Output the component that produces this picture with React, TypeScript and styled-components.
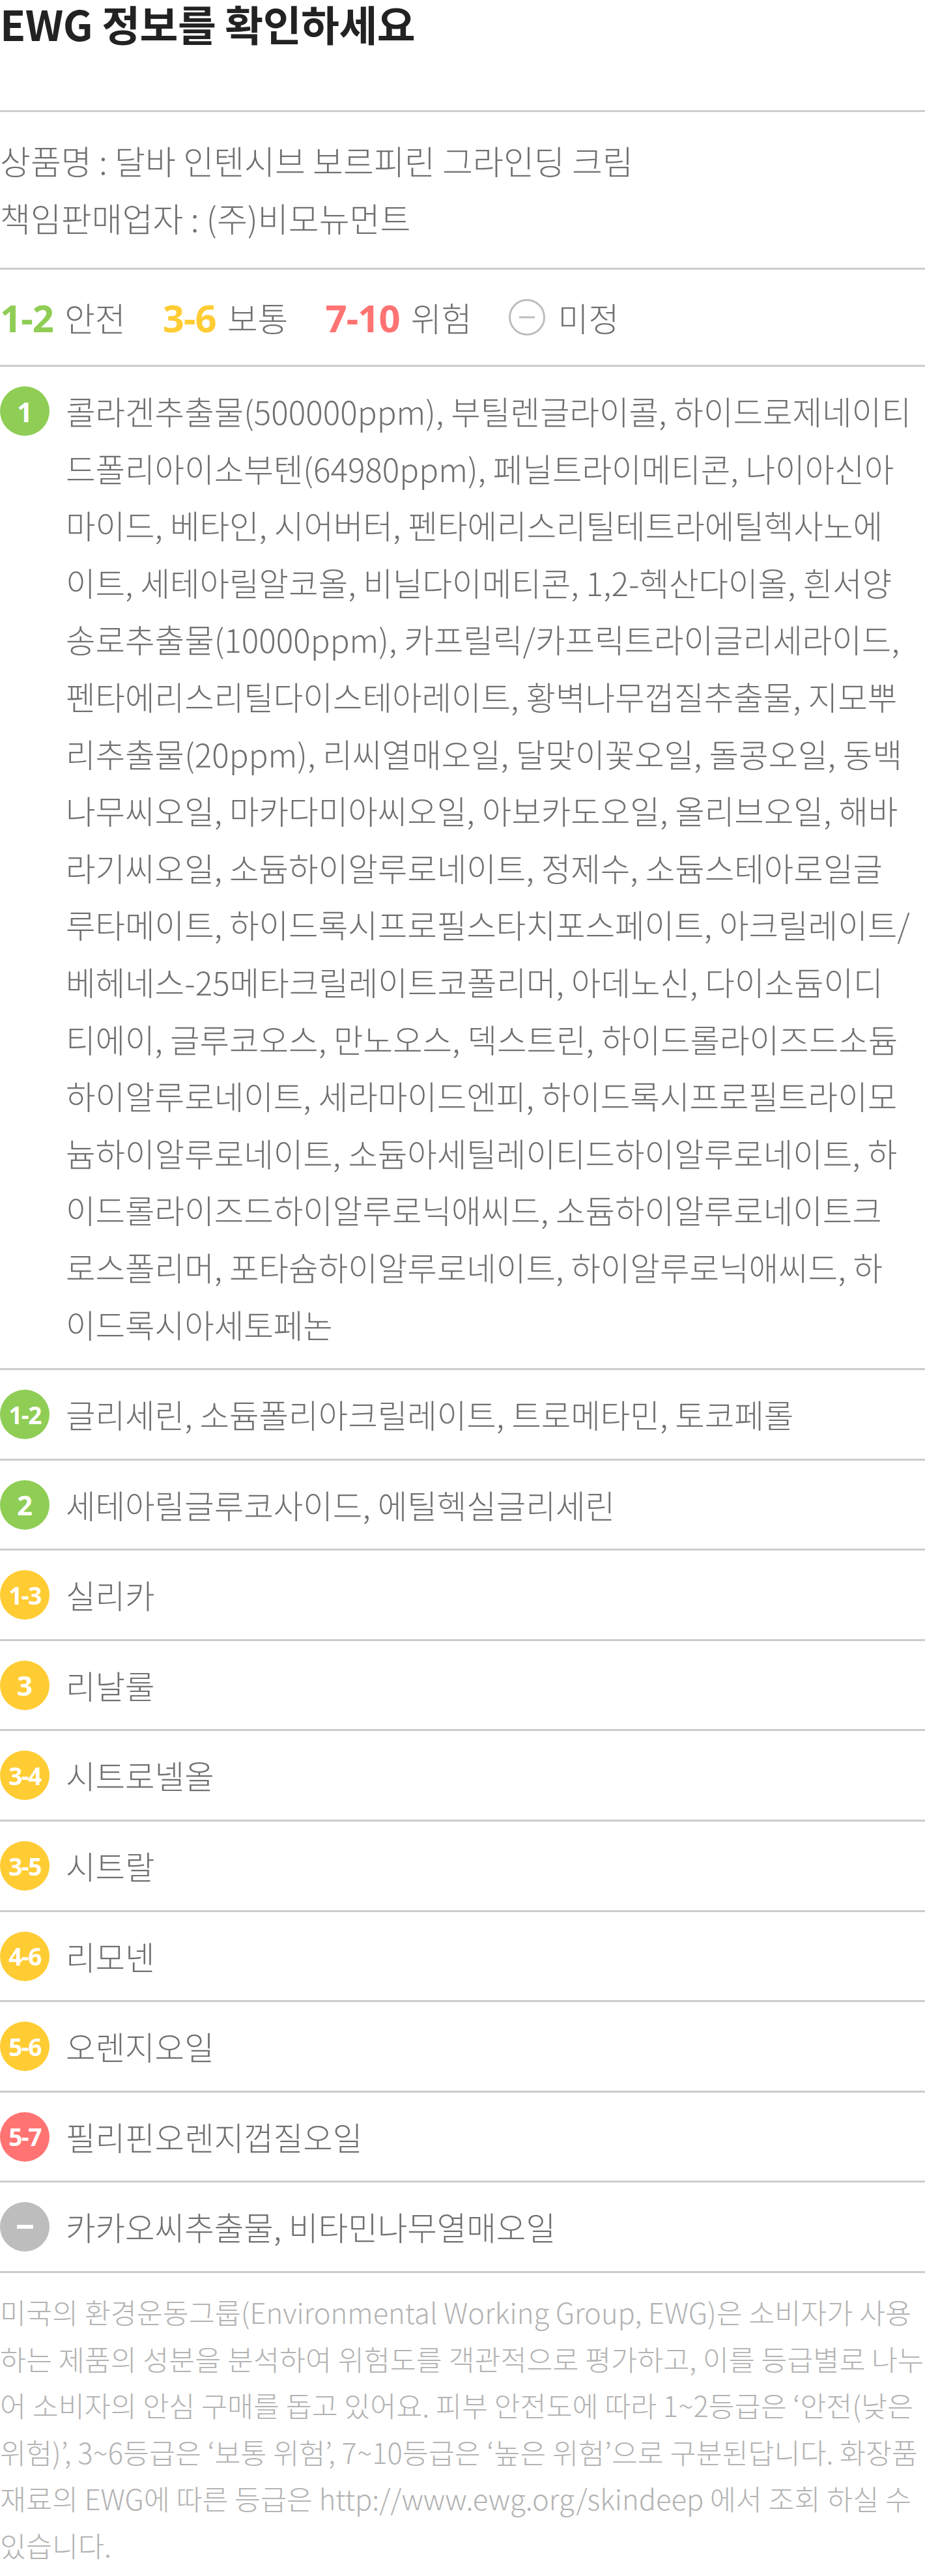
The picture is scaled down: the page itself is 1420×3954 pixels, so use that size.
import React from 'react';
import styled, { createGlobalStyle } from 'styled-components';

const GlobalStyle = createGlobalStyle`
  html, body {
    margin: 0;
    padding: 0;
    background: #ffffff;
  }
  body {
    font-family: "Noto Sans CJK KR", "Noto Sans", sans-serif;
    -webkit-font-smoothing: antialiased;
  }
`;

type Grade = 'green' | 'yellow' | 'red' | 'none';

const gradeColors: Record<Grade, string> = {
  green: '#8fcd55',
  yellow: '#ffcc33',
  red: '#ff7373',
  none: '#bdbdbd',
};

interface Ingredient {
  score: string;
  grade: Grade;
  lines: string[];
}

const ingredients: Ingredient[] = [
  {
    score: '1',
    grade: 'green',
    lines: [
      '콜라겐추출물(500000ppm), 부틸렌글라이콜, 하이드로제네이티',
      '드폴리아이소부텐(64980ppm), 페닐트라이메티콘, 나이아신아',
      '마이드, 베타인, 시어버터, 펜타에리스리틸테트라에틸헥사노에',
      '이트, 세테아릴알코올, 비닐다이메티콘, 1,2-헥산다이올, 흰서양',
      '송로추출물(10000ppm), 카프릴릭/카프릭트라이글리세라이드,',
      '펜타에리스리틸다이스테아레이트, 황벽나무껍질추출물, 지모뿌',
      '리추출물(20ppm), 리씨열매오일, 달맞이꽃오일, 돌콩오일, 동백',
      '나무씨오일, 마카다미아씨오일, 아보카도오일, 올리브오일, 해바',
      '라기씨오일, 소듐하이알루로네이트, 정제수, 소듐스테아로일글',
      '루타메이트, 하이드록시프로필스타치포스페이트, 아크릴레이트/',
      '베헤네스-25메타크릴레이트코폴리머, 아데노신, 다이소듐이디',
      '티에이, 글루코오스, 만노오스, 덱스트린, 하이드롤라이즈드소듐',
      '하이알루로네이트, 세라마이드엔피, 하이드록시프로필트라이모',
      '늄하이알루로네이트, 소듐아세틸레이티드하이알루로네이트, 하',
      '이드롤라이즈드하이알루로닉애씨드, 소듐하이알루로네이트크',
      '로스폴리머, 포타슘하이알루로네이트, 하이알루로닉애씨드, 하',
      '이드록시아세토페논',
    ],
  },
  { score: '1-2', grade: 'green', lines: ['글리세린, 소듐폴리아크릴레이트, 트로메타민, 토코페롤'] },
  { score: '2', grade: 'green', lines: ['세테아릴글루코사이드, 에틸헥실글리세린'] },
  { score: '1-3', grade: 'yellow', lines: ['실리카'] },
  { score: '3', grade: 'yellow', lines: ['리날룰'] },
  { score: '3-4', grade: 'yellow', lines: ['시트로넬올'] },
  { score: '3-5', grade: 'yellow', lines: ['시트랄'] },
  { score: '4-6', grade: 'yellow', lines: ['리모넨'] },
  { score: '5-6', grade: 'yellow', lines: ['오렌지오일'] },
  { score: '5-7', grade: 'red', lines: ['필리핀오렌지껍질오일'] },
  { score: '-', grade: 'none', lines: ['카카오씨추출물, 비타민나무열매오일'] },
];

const Page = styled.div`
  width: 1420px;
  color: #6f6f6f;
`;

const Title = styled.h1`
  margin: 0;
  padding-top: 1px;
  height: 168px;
  font-size: 64px;
  line-height: 68px;
  font-weight: 700;
  color: #222222;
  letter-spacing: -0.5px;
`;

const Section = styled.section`
  border-top: 3px solid #cccccc;
`;

const InfoSection = styled(Section)`
  padding: 30px 0 33px;
`;

const InfoLine = styled.p`
  margin: 0;
  font-size: 51px;
  line-height: 88px;
  font-weight: 300;
  color: #707070;
`;

const Legend = styled(Section)`
  display: flex;
  align-items: center;
  gap: 57px;
  height: 146px;
`;

const LegendItem = styled.div`
  display: flex;
  align-items: center;
  gap: 17px;
  font-size: 51px;
  font-weight: 300;
  color: #707070;
`;

const LegendScore = styled.span<{ $grade: Grade }>`
  font-family: "Noto Sans", sans-serif;
  font-weight: 700;
  font-size: 58px;
  letter-spacing: -1px;
  color: ${(p) => gradeColors[p.$grade]};
`;

const UnknownMark = styled.span`
  position: relative;
  width: 50px;
  height: 50px;
  border: 3px solid #bdbdbd;
  border-radius: 50%;
  margin-right: 2px;

  &::after {
    content: '';
    position: absolute;
    left: 50%;
    top: 50%;
    width: 24px;
    height: 3px;
    background: #bdbdbd;
    transform: translate(-50%, -50%);
  }
`;

const Row = styled(Section)`
  display: flex;
  align-items: flex-start;
  gap: 25px;
  padding: 24px 0;
`;

const Badge = styled.div<{ $grade: Grade; $wide: boolean }>`
  flex-shrink: 0;
  width: 76px;
  height: 76px;
  margin-top: 6px;
  border-radius: 50%;
  background: ${(p) => gradeColors[p.$grade]};
  color: #ffffff;
  display: flex;
  align-items: center;
  justify-content: center;
  font-family: "Noto Sans", sans-serif;
  font-weight: 700;
  font-size: ${(p) => (p.$wide ? '37px' : '42px')};
  letter-spacing: ${(p) => (p.$wide ? '-1.5px' : '0')};
`;

const DashMark = styled.span`
  width: 25px;
  height: 6px;
  background: #ffffff;
`;

const Names = styled.p`
  margin: 0;
  flex: 1;
  min-width: 0;
  font-size: 49.5px;
  line-height: 87.6px;
  font-weight: 300;
  color: #707070;
`;

const NameLine = styled.span`
  display: block;
  white-space: nowrap;
`;

const Footer = styled(Section)`
  padding: 24px 0 9px;
`;

const FooterText = styled.p`
  margin: 0;
  font-size: 43.5px;
  line-height: 71.5px;
  font-weight: 300;
  color: #b3b3b3;
`;

export default function App() {
  return (
    <Page>
      <GlobalStyle />
      <Title>EWG 정보를 확인하세요</Title>

      <InfoSection>
        <InfoLine>상품명 : 달바 인텐시브 보르피린 그라인딩 크림</InfoLine>
        <InfoLine>책임판매업자 : (주)비모뉴먼트</InfoLine>
      </InfoSection>

      <Legend>
        <LegendItem>
          <LegendScore $grade="green">1-2</LegendScore>안전
        </LegendItem>
        <LegendItem>
          <LegendScore $grade="yellow">3-6</LegendScore>보통
        </LegendItem>
        <LegendItem>
          <LegendScore $grade="red">7-10</LegendScore>위험
        </LegendItem>
        <LegendItem>
          <UnknownMark />미정
        </LegendItem>
      </Legend>

      {ingredients.map((item) => (
        <Row key={item.score + item.lines[0]}>
          <Badge $grade={item.grade} $wide={item.score.length > 1}>
            {item.score === '-' ? <DashMark /> : item.score}
          </Badge>
          <Names>
            {item.lines.map((line) => (
              <NameLine key={line}>{line}</NameLine>
            ))}
          </Names>
        </Row>
      ))}

      <Footer>
        <FooterText>
          미국의 환경운동그룹(Environmental Working Group, EWG)은 소비자가 사용하는 제품의 성분을 분석하여 위험도를 객관적으로 평가하고, 이를 등급별로 나누어 소비자의 안심 구매를 돕고 있어요. 피부 안전도에 따라 1~2등급은 ‘안전(낮은 위험)’, 3~6등급은 ‘보통 위험’, 7~10등급은 ‘높은 위험’으로 구분된답니다. 화장품 재료의 EWG에 따른 등급은 http://www.ewg.org/skindeep 에서 조회 하실 수 있습니다.
        </FooterText>
      </Footer>
    </Page>
  );
}
